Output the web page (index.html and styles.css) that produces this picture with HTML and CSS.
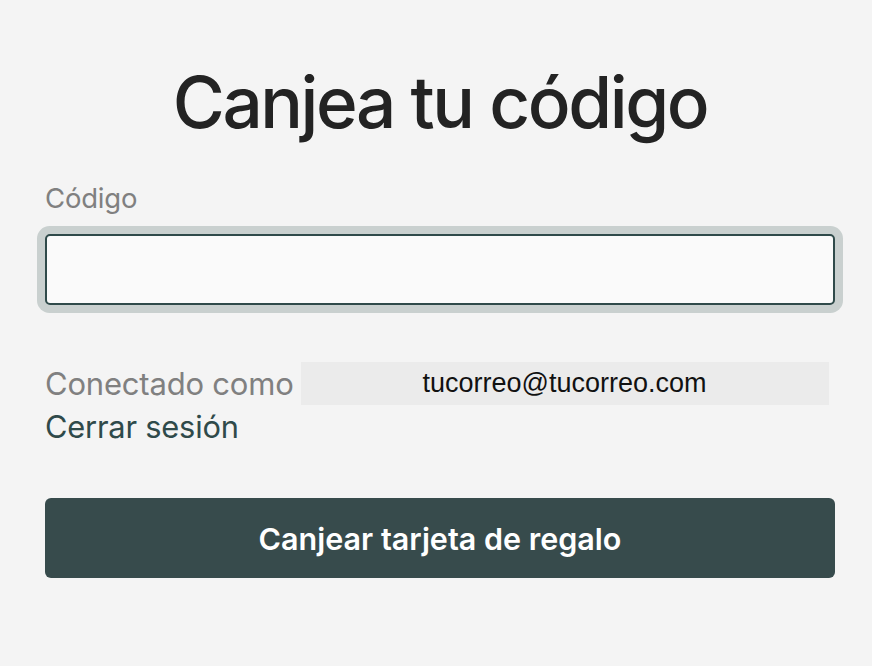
FILE: index.html
```html
<!DOCTYPE html>
<html lang="es">
<head>
<meta charset="utf-8">
<title>Canjea tu código</title>
<link rel="stylesheet" href="styles.css">
</head>
<body>
<main class="page">
  <h1 class="title">Canjea tu código</h1>
  <form class="form">
    <label class="label" for="code">Código</label>
    <input class="input" id="code" type="text">
    <div class="account">
      <div class="account-line"><span class="muted">Conectado como</span><span class="email">tucorreo@tucorreo.com</span></div>
      <a class="logout" href="#">Cerrar sesión</a>
    </div>
    <button class="button" type="button">Canjear tarjeta de regalo</button>
  </form>
</main>
</body>
</html>
```
FILE: styles.css
```css
html, body {
  margin: 0;
  padding: 0;
  background: #f4f4f4;
}
body {
  font-family: Inter, "Noto Sans", sans-serif;
  color: #222;
}
.page {
  padding: 58px 37px 0 45px;
}
.title {
  margin: 0;
  text-align: center;
  font-size: 71px;
  font-weight: 500;
  line-height: 88px;
  color: #232323;
  letter-spacing: -2.4px;
}
.form {
  display: flex;
  flex-direction: column;
  margin-top: 36px;
}
.label {
  font-size: 27.5px;
  line-height: 33px;
  color: #808080;
  letter-spacing: -0.2px;
}
.input {
  margin-top: 19px;
  height: 71px;
  box-sizing: border-box;
  border: 2px solid #2f4a4a;
  border-radius: 5px;
  background: #fafafa;
  box-shadow: 0 0 0 8px #c9d0cf;
  outline: none;
  font-size: 24px;
  padding: 0 16px;
}
.account {
  margin-top: 57px;
  display: flex;
  flex-direction: column;
  align-items: flex-start;
}
.account-line {
  display: flex;
  align-items: center;
  gap: 7px;
}
.muted {
  font-size: 31px;
  line-height: 43px;
  color: #808080;
  letter-spacing: -0.2px;
}
.email {
  display: inline-block;
  width: 528px;
  height: 43px;
  line-height: 43px;
  background: #ebebeb;
  text-align: center;
  font-family: "Liberation Sans", Arial, sans-serif;
  font-size: 27px;
  color: #111;
}
.logout {
  font-size: 30.8px;
  line-height: 44px;
  color: #2f4a4a;
  text-decoration: none;
  letter-spacing: -0.2px;
}
.button {
  margin-top: 49px;
  height: 80px;
  border: 0;
  border-radius: 6px;
  background: #374b4c;
  color: #fff;
  font-family: Inter, "Noto Sans", sans-serif;
  font-size: 30.5px;
  font-weight: 600;
  cursor: pointer;
}
```
